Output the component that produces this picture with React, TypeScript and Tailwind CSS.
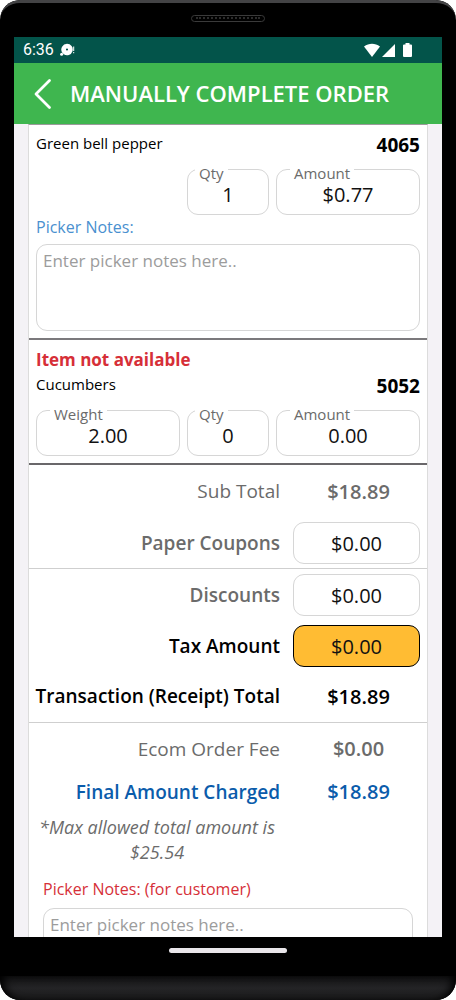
import { useId } from "react";

const box =
  "w-full rounded-[11px] border border-[#d6d6d6] bg-white text-center text-[20px] text-[#111] outline-none";

function Field({ label, value, className }: { label: string; value: string; className: string }) {
  const id = useId();
  return (
    <div className={`relative ${className}`}>
      <label
        htmlFor={id}
        className={`absolute -top-2 bg-white px-1 text-[15px] leading-6 text-[#6b6b6b] ${
          label === "Qty" ? "left-2" : "left-[14px]"
        }`}
      >
        {label}
      </label>
      <input id={id} defaultValue={value} className={`${box} h-[46px] pt-1`} />
    </div>
  );
}

function Notes({ label, tone, gap }: { label: string; tone: string; gap: string }) {
  const id = useId();
  return (
    <div className={`flex flex-col ${gap}`}>
      <label htmlFor={id} className={`text-[16px] leading-6 ${tone}`}>
        {label}
      </label>
      <textarea
        id={id}
        placeholder="Enter picker notes here.."
        className="block h-[87px] w-full resize-none rounded-[11px] border border-[#d6d6d6] bg-white px-1.5 py-1 text-[17px] leading-6 text-[#111] outline-none placeholder:text-[#9c9c9c]"
      />
    </div>
  );
}

function Row({ label, value, className }: { label: string; value: string; className: string }) {
  return (
    <div className={`grid grid-cols-[1fr_127px] items-center gap-[13px] pr-[7px] text-[19px] ${className}`}>
      <span className="text-right whitespace-nowrap">{label}</span>
      <span className="pl-1 text-center text-[20px] font-semibold">{value}</span>
    </div>
  );
}

function InputRow({
  label,
  tone,
  field = "",
}: {
  label: string;
  tone: string;
  field?: string;
}) {
  const id = useId();
  return (
    <div className="grid grid-cols-[1fr_127px] items-center gap-[13px] pr-[7px] text-[19px]">
      <label htmlFor={id} className={`text-right font-semibold ${tone}`}>
        {label}
      </label>
      <input id={id} defaultValue="$0.00" className={`${box} h-[42px] ${field}`} />
    </div>
  );
}

function StatusBar() {
  return (
    <div className="flex h-[26px] shrink-0 items-center bg-[#03544a] pr-[30px] pl-[9px] text-white">
      <span className="font-[Roboto,sans-serif] text-[16px]">6:36</span>
      <svg className="ml-1.5 h-3.5 w-4" viewBox="0 0 16 14" fill="currentColor" aria-hidden="true">
        <path
          fillRule="evenodd"
          d="M7 .8a5.700 5.700 0 1 1-3.200 10.400L2.100 9.400A5.700 5.700 0 0 1 7 .8ZM7 5.400a1.100 1.100 0 1 0 0 2.200 1.100 1.100 0 0 0 0-2.200Z"
        />
        <circle cx="1.600" cy="11.300" r="1.500" />
        <path d="M13.200 3.500h1v4.500h-1zM13.200 9h1v1.200h-1z" />
      </svg>
      <svg className="ml-auto h-[15px] w-12" viewBox="0 0 48 15" fill="currentColor" aria-hidden="true">
        <path d="M0 3.600C5-.1 11-.1 16 3.600L8 14Z" />
        <path d="M31 1v13H18Z" />
        <path d="M41.500 0h4v1.500h1.500a1 1 0 0 1 1 1V13a1 1 0 0 1-1 1h-7a1 1 0 0 1-1-1V2.500a1 1 0 0 1 1-1h1.500Z" />
      </svg>
    </div>
  );
}

export default function App() {
  return (
    <div className="h-screen bg-white">
      <div className="flex h-full flex-col overflow-hidden rounded-[20px] bg-black font-['Open_Sans','Noto_Sans',sans-serif]">
        <div className="flex h-[37px] shrink-0 items-center justify-center rounded-t-[20px] border-t-[3px] border-[#434345]">
          <div className="mb-1 flex h-[7px] w-[74px] items-center rounded-full border border-[#3a3a3a] px-1">
            <div className="w-full border-t-2 border-dotted border-[#2c2c2c]" />
          </div>
        </div>

        <div className="mx-[14px] flex min-h-0 flex-1 flex-col bg-[#f4f2f6]">
          <StatusBar />
          <header className="flex h-[61px] shrink-0 items-center bg-[#3fb64f] pl-5 text-white">
            <button type="button" aria-label="Back">
              <svg className="h-8 w-[18px]" viewBox="0 0 18 32" fill="none" aria-hidden="true">
                <path
                  d="M15.500 2.500 2 16l13.500 13.500"
                  stroke="currentColor"
                  strokeWidth="2.800"
                  strokeLinecap="round"
                  strokeLinejoin="round"
                />
              </svg>
            </button>
            <h1 className="ml-[18px] text-[22px] font-semibold whitespace-nowrap">MANUALLY COMPLETE ORDER</h1>
          </header>

          <main className="mx-[14px] min-h-0 flex-1 overflow-y-auto border-x border-t border-x-[#dcdcdc] border-t-[#9a9a9a] bg-white [scrollbar-width:none]">
            <section className="border-b-2 border-[#7b797c] px-[7px] pt-2 pb-[7px]">
              <div className="flex items-start justify-between text-black">
                <span className="text-[15px] leading-5">Green bell pepper</span>
                <span className="text-[19px] leading-6 font-bold">4065</span>
              </div>
              <div className="mt-3 flex justify-end gap-[7px]">
                <Field label="Qty" value="1" className="w-[82px]" />
                <Field label="Amount" value="$0.77" className="w-36" />
              </div>
              <Notes label="Picker Notes:" tone="text-[#4a90cf]" gap="gap-[5px]" />
            </section>

            <section className="border-b-2 border-[#69676a] px-[7px] pt-2 pb-[7px]">
              <p className="text-[17px] leading-6 font-bold text-[#d62f38]">Item not available</p>
              <div className="mt-0.5 flex items-start justify-between text-black">
                <span className="text-[15px] leading-5">Cucumbers</span>
                <span className="text-[19px] leading-6 font-bold">5052</span>
              </div>
              <div className="mt-3 flex gap-[7px]">
                <Field label="Weight" value="2.00" className="min-w-0 flex-1" />
                <Field label="Qty" value="0" className="w-[82px]" />
                <Field label="Amount" value="0.00" className="w-36" />
              </div>
            </section>

            <section className="border-b border-[#cfcfcf] pb-1">
              <Row label="Sub Total" value="$18.89" className="mb-1 h-[53px] text-[#6b6b6b]" />
              <InputRow label="Paper Coupons" tone="text-[#6b6b6b]" />
            </section>

            <section className="border-b border-[#cfcfcf] pt-[5px]">
              <div className="flex flex-col gap-[9px]">
                <InputRow label="Discounts" tone="text-[#6b6b6b]" />
                <InputRow label="Tax Amount" tone="text-black" field="border-black! bg-[#ffbc33]!" />
              </div>
              <Row label="Transaction (Receipt) Total" value="$18.89" className="h-[55px] pt-1 font-semibold text-black" />
            </section>

            <section className="pb-4">
              <Row label="Ecom Order Fee" value="$0.00" className="h-[52px] text-[#6b6b6b]" />
              <Row label="Final Amount Charged" value="$18.89" className="h-[34px] font-semibold text-[#0b5cab]" />
              <p className="mt-1.5 mr-[142px] text-center text-[18px] leading-[25px] text-[#6b6b6b] italic">
                *Max allowed total amount is $25.54
              </p>
              <div className="mt-3 px-[14px]">
                <Notes label="Picker Notes: (for customer)" tone="text-[#d62f38]" gap="gap-[7px]" />
              </div>
            </section>
          </main>
        </div>

        <div className="flex h-[63px] shrink-0 flex-col justify-between">
          <div className="mx-auto mt-[11px] h-[5px] w-[118px] rounded-full bg-[#e9e6ea]" />
          <div className="h-6 rounded-b-[20px] bg-linear-to-b from-[#111112] via-[#242426] to-[#19191a] shadow-[inset_8px_0_8px_-4px_#000,inset_-8px_0_8px_-4px_#000]" />
        </div>
      </div>
    </div>
  );
}
